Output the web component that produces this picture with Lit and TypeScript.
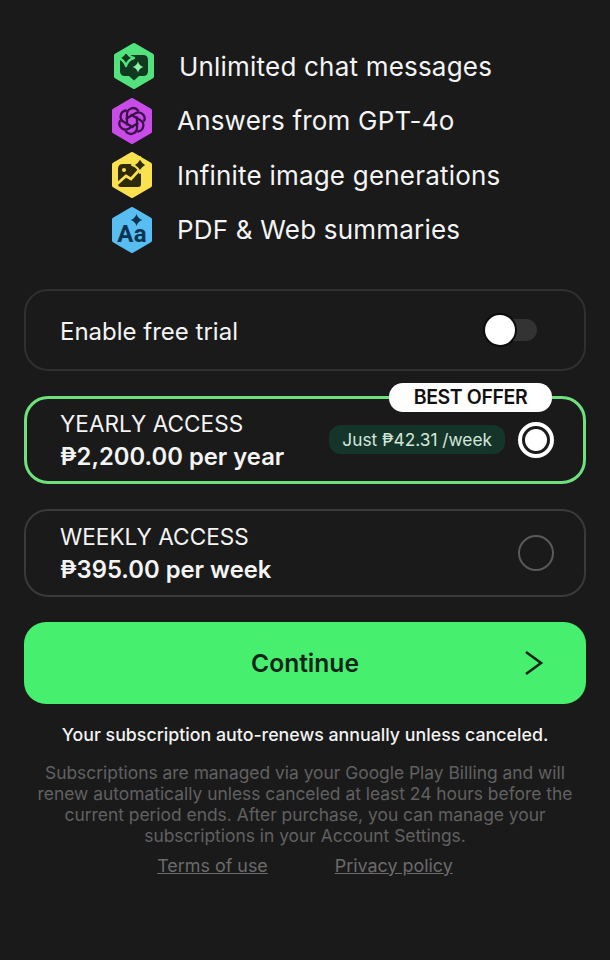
import { LitElement, html, svg, css } from "lit"
import { customElement } from "lit/decorators.js"

const hex = (fill: string) => svg`
  <path d="M21 3 L39 13.5 V34.5 L21 45 L3 34.5 V13.5 Z" fill=${fill} stroke=${fill} stroke-width="4" stroke-linejoin="round"/>`

const star = (x: number, y: number, r: number, fill: string, stroke = "none", sw = 0) => {
  const k = r * 0.22
  return svg`<path d="M${x} ${y - r} Q${x + k} ${y - k} ${x + r} ${y} Q${x + k} ${y + k} ${x} ${y + r} Q${x - k} ${y + k} ${x - r} ${y} Q${x - k} ${y - k} ${x} ${y - r} Z"
    fill=${fill} stroke=${stroke} stroke-width=${sw} stroke-linejoin="round"/>`
}

const chatIcon = svg`
  ${hex("#52e27e")}
  <path d="M11 13 H30 Q35 13 35 18 V29 Q35 34 30 34 H26 L21 38.5 L16 34 H12 Q7 34 7 29 V18 Q7 13 11 13 Z" fill="#10391f"/>
  ${star(13, 16, 8, "#10391f", "#52e27e", 2.4)}
  ${star(25, 25, 5.5, "#8df0a8")}`

const knotIcon = svg`
  ${hex("#c94ce8")}
  <g transform="translate(21 24)" fill="none" stroke="#3a1149" stroke-width="2.3" stroke-linecap="round">
    ${[0, 60, 120, 180, 240, 300].map(
      (a) => svg`<path transform="rotate(${a})" d="M-5 3.5 V-6.5 A6.2 6.2 0 0 1 6 -10.6"/>`,
    )}
  </g>`

const imageIcon = svg`
  ${hex("#f9e14f")}
  <path d="M12 13 H24 L30 20 V33 Q30 36 27 36 H10 Q7 36 7 33 V18 Q7 13 12 13 Z" fill="#2f2a0a"/>
  <circle cx="13" cy="19" r="2" fill="#f9e14f"/>
  <path d="M6 33 L15 25 L20 28 L30 17" fill="none" stroke="#f9e14f" stroke-width="2.8"/>
  ${star(29, 14, 8, "#2f2a0a", "#f9e14f", 2)}`

const textIcon = svg`
  ${hex("#58bdf0")}
  ${star(25.5, 14, 6, "#0c3352")}
  <text x="21" y="36" text-anchor="middle" class="aa">Aa</text>`

const features = [
  { icon: chatIcon, label: "Unlimited chat messages", shifted: true },
  { icon: knotIcon, label: "Answers from GPT-4o" },
  { icon: imageIcon, label: "Infinite image generations" },
  { icon: textIcon, label: "PDF & Web summaries" },
]

@customElement("app-root")
export class AppRoot extends LitElement {
  static styles = css`
    :host {
      display: block;
      height: 960px;
      background: #1a1a1a;
      color: #f4f4f4;
      font-family: Inter, "Liberation Sans", sans-serif;
      overflow: hidden;
    }
    .page {
      display: flex;
      flex-direction: column;
      padding: 42px 24px 0;
    }
    .features {
      display: flex;
      flex-direction: column;
      gap: 6.6px;
      padding-left: 87px;
    }
    .feature {
      display: flex;
      align-items: center;
      gap: 24px;
      height: 48px;
      font-size: 26px;
      letter-spacing: 0.2px;
      white-space: nowrap;
    }
    .feature.shifted {
      padding-left: 2px;
    }
    .feature svg {
      width: 42px;
      height: 48px;
      flex: none;
    }
    .aa {
      font-family: Roboto, sans-serif;
      font-size: 24px;
      font-weight: 700;
      fill: #0c3352;
    }
    .card {
      position: relative;
      display: flex;
      align-items: center;
      justify-content: space-between;
      box-sizing: border-box;
      border: 2px solid #3a3a3a;
      border-radius: 24px;
      padding: 0 30px 0 34px;
    }
    .trial {
      height: 82px;
      margin-top: 35px;
      font-size: 24px;
      padding-right: 47px;
      border-color: #303030;
    }
    .trial-label {
      padding-top: 3px;
    }
    .switch {
      position: relative;
      width: 37px;
      height: 22px;
      border-radius: 11px;
      background: #333;
    }
    .thumb {
      position: absolute;
      left: -15px;
      top: -4px;
      width: 30px;
      height: 30px;
      border-radius: 50%;
      background: #fff;
      box-shadow: 0 0 0 2px #0c0c0c;
    }
    .plan {
      height: 88px;
      margin-top: 25px;
    }
    .plan.on {
      border: 3px solid #6fe07c;
      padding-left: 33px;
      padding-right: 29px;
    }
    .plan-name {
      font-size: 22.6px;
      line-height: 33px;
    }
    .plan-price {
      font-size: 23.8px;
      font-weight: 600;
      line-height: 33px;
    }
    .side {
      display: flex;
      align-items: center;
      gap: 13px;
    }
    .saving {
      padding: 0 13px;
      height: 29px;
      line-height: 29px;
      border-radius: 12px;
      background: #16352a;
      color: #d4e6da;
      font-size: 17.3px;
    }
    .radio {
      box-sizing: border-box;
      width: 36px;
      height: 36px;
      border-radius: 50%;
      border: 2px solid #5a5a5a;
    }
    .radio.on {
      border: 4px solid #fff;
      padding: 3px;
    }
    .radio.on::before {
      content: "";
      display: block;
      width: 100%;
      height: 100%;
      border-radius: 50%;
      background: #fff;
    }
    .badge {
      position: absolute;
      top: -16px;
      right: 31px;
      width: 163px;
      height: 29px;
      line-height: 29px;
      text-align: center;
      border-radius: 14px;
      background: #fff;
      color: #111;
      font-size: 19.5px;
      font-weight: 600;
      letter-spacing: -0.4px;
    }
    .continue {
      position: relative;
      height: 82px;
      margin-top: 25px;
      display: flex;
      align-items: center;
      justify-content: center;
      border-radius: 22px;
      background: #47ef6e;
      color: #14241a;
      font-size: 24.6px;
      font-weight: 600;
    }
    .continue svg {
      position: absolute;
      right: 41px;
      top: 28px;
      width: 22px;
      height: 26px;
    }
    .renew {
      margin-top: 19px;
      text-align: center;
      font-size: 17.8px;
      font-weight: 500;
      line-height: 24px;
      color: #f2f2f2;
    }
    .legal {
      margin-top: 15px;
      text-align: center;
      font-size: 17.4px;
      line-height: 21px;
      color: #616161;
    }
    .links {
      display: flex;
      justify-content: center;
      gap: 67px;
      margin-top: 8px;
      font-size: 17.9px;
      line-height: 24px;
      color: #6b6b6b;
      text-decoration: underline;
    }
  `

  render() {
    return html`
      <div class="page">
        <div class="features">
          ${features.map(
            (f) => html`
              <div class="feature ${f.shifted ? "shifted" : ""}">
                <svg viewBox="0 0 42 48">${f.icon}</svg>
                <span>${f.label}</span>
              </div>
            `,
          )}
        </div>

        <div class="card trial">
          <span class="trial-label">Enable free trial</span>
          <div class="switch"><div class="thumb"></div></div>
        </div>

        <div class="card plan on">
          <div class="badge">BEST OFFER</div>
          <div>
            <div class="plan-name">YEARLY ACCESS</div>
            <div class="plan-price">₱2,200.00 per year</div>
          </div>
          <div class="side">
            <div class="saving">Just ₱42.31 /week</div>
            <div class="radio on"></div>
          </div>
        </div>

        <div class="card plan">
          <div>
            <div class="plan-name">WEEKLY ACCESS</div>
            <div class="plan-price">₱395.00 per week</div>
          </div>
          <div class="radio"></div>
        </div>

        <div class="continue">
          Continue
          <svg viewBox="0 0 22 26" fill="none" stroke="#14241a" stroke-width="2.6">
            <path d="M3 2 L18 13 L3 24"/>
          </svg>
        </div>

        <div class="renew">Your subscription auto-renews annually unless canceled.</div>
        <div class="legal">
          Subscriptions are managed via your Google Play Billing and will<br />
          renew automatically unless canceled at least 24 hours before the<br />
          current period ends. After purchase, you can manage your<br />
          subscriptions in your Account Settings.
        </div>
        <div class="links">
          <span>Terms of use</span>
          <span>Privacy policy</span>
        </div>
      </div>
    `
  }
}
